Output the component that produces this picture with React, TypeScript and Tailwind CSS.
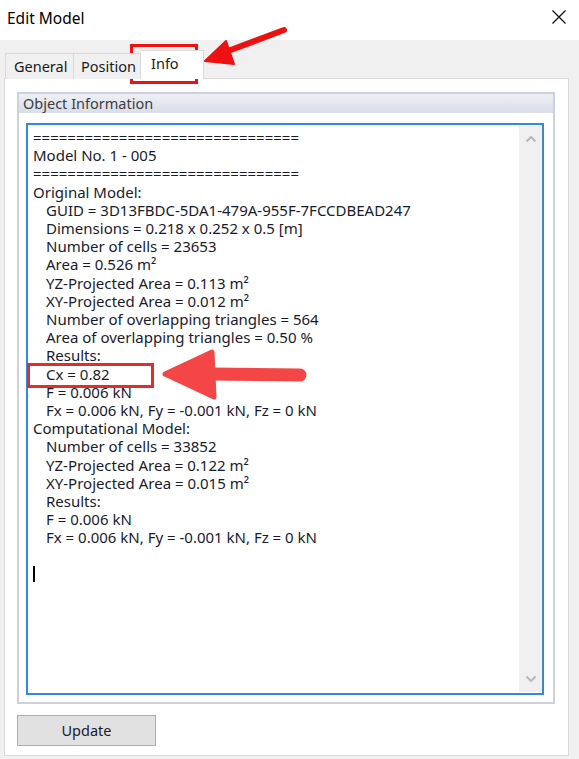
import React from "react";

type Line = { text: string; indent?: boolean };

const rule = "===============================";

const lines: Line[] = [
  { text: rule },
  { text: "Model No. 1 - 005" },
  { text: rule },
  { text: "Original Model:" },
  { text: "GUID = 3D13FBDC-5DA1-479A-955F-7FCCDBEAD247", indent: true },
  { text: "Dimensions = 0.218 x 0.252 x 0.5 [m]", indent: true },
  { text: "Number of cells = 23653", indent: true },
  { text: "Area = 0.526 m²", indent: true },
  { text: "YZ-Projected Area = 0.113 m²", indent: true },
  { text: "XY-Projected Area = 0.012 m²", indent: true },
  { text: "Number of overlapping triangles = 564", indent: true },
  { text: "Area of overlapping triangles = 0.50 %", indent: true },
  { text: "Results:", indent: true },
  { text: "Cx = 0.82", indent: true },
  { text: "F = 0.006 kN", indent: true },
  { text: "Fx = 0.006 kN, Fy = -0.001 kN, Fz = 0 kN", indent: true },
  { text: "Computational Model:" },
  { text: "Number of cells = 33852", indent: true },
  { text: "YZ-Projected Area = 0.122 m²", indent: true },
  { text: "XY-Projected Area = 0.015 m²", indent: true },
  { text: "Results:", indent: true },
  { text: "F = 0.006 kN", indent: true },
  { text: "Fx = 0.006 kN, Fy = -0.001 kN, Fz = 0 kN", indent: true },
];

const font = { fontFamily: '"Noto Sans", "Open Sans", sans-serif' };

export default function App() {
  return (
    <div
      className="relative w-[579px] h-[759px] bg-[#f0f0f0] flex flex-col overflow-hidden text-[#1a1a1a]"
      style={font}
    >
      {/* title bar */}
      <div className="h-[40px] bg-white flex items-center justify-between pl-[7px] pr-[12px] shrink-0">
        <span className="text-[15.5px] leading-none text-black -mt-[3px]">Edit Model</span>
        <svg width="16" height="16" viewBox="0 0 16 16" className="-mt-[6px]">
          <path d="M1.5 1.5 L14.5 14.5 M14.5 1.5 L1.5 14.5" stroke="#111" strokeWidth="1.3" />
        </svg>
      </div>

      {/* tabs */}
      <div className="flex items-end pl-[5px] pt-[9px] h-[38px] shrink-0 relative z-10">
        <div className="h-[26px] w-[69px] pl-[8px] flex items-center border border-[#d9d9d9] border-b-0 bg-[#f0f0f0] text-[14.5px] -mb-px">
          General
        </div>
        <div className="h-[26px] w-[67px] pl-[7px] overflow-hidden whitespace-nowrap flex items-center border border-[#d9d9d9] border-l-0 border-b-0 bg-[#f0f0f0] text-[14.5px] -mb-px">
          Position
        </div>
        <div className="h-[29px] w-[63px] pl-[10px] flex items-center border border-[#d9d9d9] border-l-0 border-b-0 bg-white text-[14.5px] -mb-px pb-[2px]">
          Info
        </div>
      </div>

      {/* tab page */}
      <div className="mx-[4px] w-[565px] h-[678px] bg-white border border-[#d9d9d9] flex flex-col pt-[13px] px-[12px]">
        {/* group box */}
        <div className="w-[538px] h-[612px] border-2 border-[#cdd1de] flex flex-col">
          <div className="h-[19px] bg-gradient-to-b from-[#eef0f5] to-[#d9dde8] flex items-center pl-[4px] text-[14.5px] text-[#3c3c3c] leading-none">
            Object Information
          </div>
          <div className="flex-1 bg-white px-[7px] pt-[10px] pb-[7px]">
            {/* info text box */}
            <div className="w-[518px] h-[572px] border-2 border-[#2f8ae0] flex">
              <div className="flex-1 pl-[5px] pt-[3px] text-[15px] leading-[18.2px] text-[#1a1a2e] overflow-hidden">
                {lines.map((l, i) => (
                  <div key={i} className={l.indent ? "pl-[13px] whitespace-pre" : "whitespace-pre"}>
                    {l.text}
                  </div>
                ))}
                <div className="h-[18.2px]" />
                <div className="h-[18.2px] flex items-center">
                  <div className="w-[1.5px] h-[16px] bg-black" />
                </div>
              </div>
              {/* scrollbar */}
              <div className="w-[23px] bg-[#f0f0f0] flex flex-col justify-between items-center py-[9px] my-px">
                <svg width="12" height="8" viewBox="0 0 12 8">
                  <path d="M1.5 6.5 L6 2 L10.5 6.5" stroke="#b8b8b8" strokeWidth="2" fill="none" />
                </svg>
                <svg width="12" height="8" viewBox="0 0 12 8">
                  <path d="M1.5 1.5 L6 6 L10.5 1.5" stroke="#b8b8b8" strokeWidth="2" fill="none" />
                </svg>
              </div>
            </div>
          </div>
        </div>

        <div className="pt-[11px]">
          <button className="w-[139px] h-[31px] bg-[#e1e1e1] border border-[#adadad] text-[14.5px] text-[#1a1a2e]">
            Update
          </button>
        </div>
      </div>

      {/* annotation: box around the Info tab */}
      <div className="absolute left-[130px] top-[44px] w-[68px] h-[40px] border-[3px] border-[#ee1111] pointer-events-none" />
      {/* annotation: arrow pointing at the Info tab */}
      <svg className="absolute left-0 top-0 pointer-events-none" width="579" height="759">
        <path d="M284 30 L228 51" stroke="#ee1111" strokeWidth="6" strokeLinecap="round" />
        <path d="M205 61 L226 41 L234 64 Z" fill="#ee1111" stroke="#ee1111" strokeWidth="2" strokeLinejoin="round" />
      </svg>

      {/* annotation: box around Cx */}
      <div className="absolute left-[27px] top-[363px] w-[127px] h-[25px] border-[3px] border-[#e62b2b] pointer-events-none" />
      {/* annotation: arrow pointing at Cx */}
      <svg className="absolute left-0 top-0 pointer-events-none" width="579" height="759">
        <path d="M210 374 L300 375" stroke="#f44646" strokeWidth="13" strokeLinecap="round" />
        <path d="M165 374 L212 352 L214 397 Z" fill="#f44646" stroke="#f44646" strokeWidth="5" strokeLinejoin="round" />
      </svg>
    </div>
  );
}
